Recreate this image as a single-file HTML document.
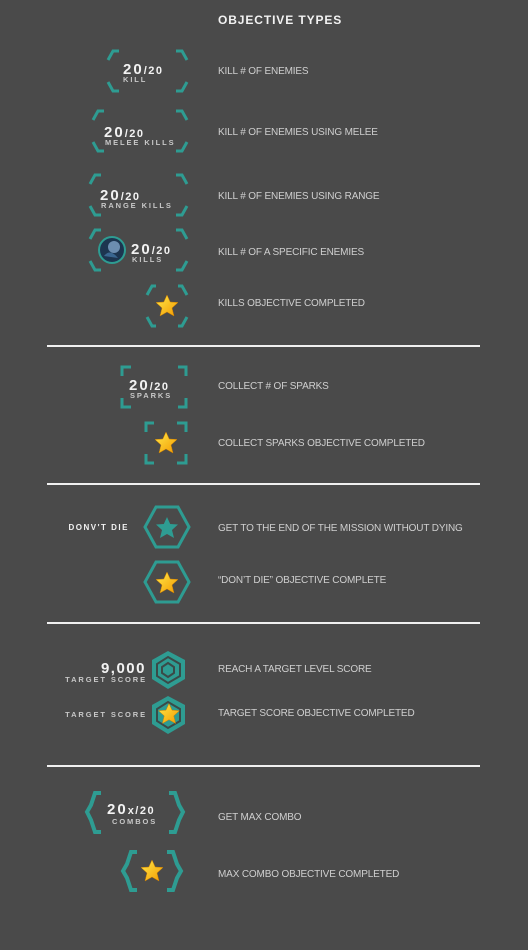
<!DOCTYPE html>
<html><head><meta charset="utf-8"><style>
html,body{margin:0;padding:0;background:#4a4a4a;width:528px;height:950px;overflow:hidden}
svg{display:block}
.t{font-family:"Liberation Sans",sans-serif;fill:#cfcfcf;font-size:10px;letter-spacing:-0.15px}
.b{font-family:"Liberation Sans",sans-serif;font-weight:bold;fill:#f2f2f2}
.s{font-family:"Liberation Sans",sans-serif;fill:#c8c8c8;font-size:7.5px;letter-spacing:1.9px;font-weight:bold}
</style></head><body>
<svg width="528" height="950" viewBox="0 0 528 950" xmlns="http://www.w3.org/2000/svg">
<defs>
<linearGradient id="g" x1="0" y1="0" x2="1" y2="1"><stop offset="0" stop-color="#ffe94a"/><stop offset="1" stop-color="#f39a00"/></linearGradient>
<polygon id="star" points="0,-11 3.2,-4 11,-3.5 5,2 7,10 0,6 -7,10 -5,2 -11,-3.5 -3.2,-4" fill="url(#g)" stroke="#d08000" stroke-width="0.5"/>
</defs>
<g fill="none" stroke="#2e9c92" stroke-width="3">
<path d="M119,51 H113 L108,60 M108,82 L113,91 H119 M176,51 H182 L187,60 M187,82 L182,91 H176"/>
<path d="M104,111 H98 L93,120 M93,142 L98,151 H104 M176,111 H182 L187,120 M187,142 L182,151 H176"/>
<path d="M101,175 H95 L90,184 M90,206 L95,215 H101 M176,175 H182 L187,184 M187,206 L182,215 H176"/>
<path d="M101,230 H95 L90,239 M90,261 L95,270 H101 M176,230 H182 L187,239 M187,261 L182,270 H176"/>
<path d="M156,286 H152 L147,295 M147,317 L152,326 H156 M178,286 H182 L187,295 M187,317 L182,326 H178"/>
<path d="M122,376 V367 H131 M178,367 H186 V376 M122,398 V407 H131 M178,407 H186 V398"/>
<path d="M146,432 V423 H154 M177,423 H186 V432 M146,454 V463 H154 M177,463 H186 V454"/>
<polygon points="156,507 178,507 189,527 178,547 156,547 145,527"/>
<polygon points="156,562 178,562 189,582 178,602 156,602 145,582"/>
<g stroke-width="4" stroke-linejoin="miter">
<polyline points="101,793 95,793 91,805 87,812 91,820 95,832 101,832"/>
<polyline points="169,793 175,793 179,805 183,812 179,820 175,832 169,832"/>
<polyline points="137,852 131,852 127,864 123,871 127,878 131,890 137,890"/>
<polyline points="167,852 173,852 177,864 181,871 177,878 173,890 167,890"/>
</g>
</g>
<polygon points="0,-11 3.2,-4 11,-3.5 5,2 7,10 0,6 -7,10 -5,2 -11,-3.5 -3.2,-4" fill="#2e9c92" transform="translate(167,528)"/>
<use href="#star" transform="translate(167,306)"/>
<use href="#star" transform="translate(166,443)"/>
<use href="#star" transform="translate(167,583)"/>
<polygon points="168,651 185,660 185,679 168,689 152,679 152,660" fill="#2e9c92"/>
<polygon points="168,657 180,664 180,676 168,683 157,676 157,664" fill="none" stroke="#3a4a48" stroke-width="2"/>
<polygon points="168,663 174,667 174,673 168,677 162,673 162,667" fill="none" stroke="#3a4a48" stroke-width="2"/>
<polygon points="168,696 185,705 185,724 168,734 152,724 152,705" fill="#2e9c92"/>
<polygon points="168,702 180,709 180,721 168,728 157,721 157,709" fill="none" stroke="#3a4a48" stroke-width="2"/>
<use href="#star" transform="translate(169,714) scale(0.95)"/>
<use href="#star" transform="translate(152,871)"/>
<circle cx="112" cy="250" r="13" fill="#1d3550" stroke="#2e9c92" stroke-width="2"/>
<circle cx="114" cy="247" r="6" fill="#6c8db0"/>
<path d="M104,256 Q110,248 118,258" fill="#3a6690"/>
<text class="b" x="123" y="74" font-size="15" letter-spacing="2">20<tspan font-size="11" letter-spacing="1.5">/20</tspan></text>
<text class="s" x="123" y="82">KILL</text>
<text class="b" x="104" y="137" font-size="15" letter-spacing="2">20<tspan font-size="11" letter-spacing="1.5">/20</tspan></text>
<text class="s" x="105" y="145">MELEE KILLS</text>
<text class="b" x="100" y="200" font-size="15" letter-spacing="2">20<tspan font-size="11" letter-spacing="1.5">/20</tspan></text>
<text class="s" x="101" y="208">RANGE KILLS</text>
<text class="b" x="131" y="254" font-size="15" letter-spacing="2">20<tspan font-size="11" letter-spacing="1.5">/20</tspan></text>
<text class="s" x="132" y="262">KILLS</text>
<text class="b" x="129" y="390" font-size="15" letter-spacing="2">20<tspan font-size="11" letter-spacing="1.5">/20</tspan></text>
<text class="s" x="130" y="398">SPARKS</text>
<text class="b" x="129" y="530" font-size="8" letter-spacing="1.5" text-anchor="end">DONV'T DIE</text>
<text class="b" x="146" y="673" font-size="15" letter-spacing="1.5" text-anchor="end">9,000</text>
<text class="s" x="147" y="682" text-anchor="end" letter-spacing="1.1" font-size="7">TARGET SCORE</text>
<text class="s" x="147" y="717" text-anchor="end" letter-spacing="1.1" font-size="7">TARGET SCORE</text>
<text class="b" x="107" y="814" font-size="15" letter-spacing="2">20<tspan font-size="11" letter-spacing="1.5">x/20</tspan></text>
<text class="s" x="112" y="824">COMBOS</text>
<text class="b" x="218" y="24" font-size="12" letter-spacing="0.9">OBJECTIVE TYPES</text>
<text class="t" x="218" y="74">KILL # OF ENEMIES</text>
<text class="t" x="218" y="135">KILL # OF ENEMIES USING MELEE</text>
<text class="t" x="218" y="199">KILL # OF ENEMIES USING RANGE</text>
<text class="t" x="218" y="255">KILL # OF A SPECIFIC ENEMIES</text>
<text class="t" x="218" y="306">KILLS OBJECTIVE COMPLETED</text>
<text class="t" x="218" y="389">COLLECT # OF SPARKS</text>
<text class="t" x="218" y="446">COLLECT SPARKS OBJECTIVE COMPLETED</text>
<text class="t" x="218" y="531">GET TO THE END OF THE MISSION WITHOUT DYING</text>
<text class="t" x="218" y="583">“DON’T DIE” OBJECTIVE COMPLETE</text>
<text class="t" x="218" y="672">REACH A TARGET LEVEL SCORE</text>
<text class="t" x="218" y="716">TARGET SCORE OBJECTIVE COMPLETED</text>
<text class="t" x="218" y="820">GET MAX COMBO</text>
<text class="t" x="218" y="877">MAX COMBO OBJECTIVE COMPLETED</text>
<g fill="#f0f0f0">
<rect x="47" y="345" width="433" height="2"/>
<rect x="47" y="483" width="433" height="2"/>
<rect x="47" y="622" width="433" height="2"/>
<rect x="47" y="765" width="433" height="2"/>
</g>
</svg>
</body></html>
